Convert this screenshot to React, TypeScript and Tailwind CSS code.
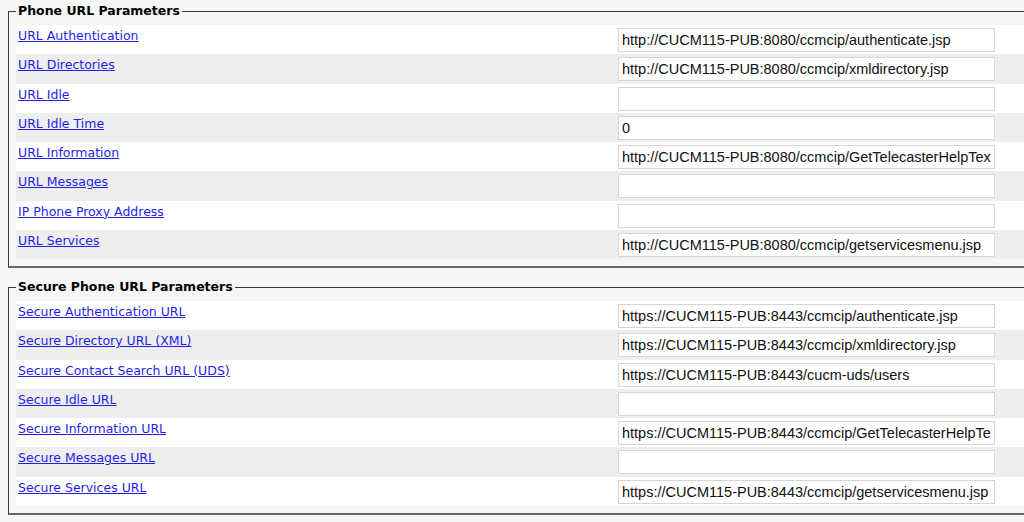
const phoneRows = [
  { label: "URL Authentication", value: "http://CUCM115-PUB:8080/ccmcip/authenticate.jsp" },
  { label: "URL Directories", value: "http://CUCM115-PUB:8080/ccmcip/xmldirectory.jsp" },
  { label: "URL Idle", value: "" },
  { label: "URL Idle Time", value: "0" },
  { label: "URL Information", value: "http://CUCM115-PUB:8080/ccmcip/GetTelecasterHelpText.jsp" },
  { label: "URL Messages", value: "" },
  { label: "IP Phone Proxy Address", value: "" },
  { label: "URL Services", value: "http://CUCM115-PUB:8080/ccmcip/getservicesmenu.jsp" },
];

const secureRows = [
  { label: "Secure Authentication URL", value: "https://CUCM115-PUB:8443/ccmcip/authenticate.jsp" },
  { label: "Secure Directory URL (XML)", value: "https://CUCM115-PUB:8443/ccmcip/xmldirectory.jsp" },
  { label: "Secure Contact Search URL (UDS)", value: "https://CUCM115-PUB:8443/cucm-uds/users" },
  { label: "Secure Idle URL", value: "" },
  { label: "Secure Information URL", value: "https://CUCM115-PUB:8443/ccmcip/GetTelecasterHelpText.jsp" },
  { label: "Secure Messages URL", value: "" },
  { label: "Secure Services URL", value: "https://CUCM115-PUB:8443/ccmcip/getservicesmenu.jsp" },
];

type Row = { label: string; value: string };

function ParamGroup({ title, rows }: { title: string; rows: Row[] }) {
  return (
    <fieldset className="ml-[8px] w-[1100px] border border-[#3a3a3a] border-b-2 border-b-[#666] pl-[7px] pt-[5px] pb-[7px]">
      <legend className="px-[2px] text-[12.5px] font-bold leading-[18px] text-black">{title}</legend>
      {rows.map((r, i) => (
        <div
          key={r.label}
          className={`flex h-[29.25px] items-start pt-[3px] ${i % 2 === 0 ? "bg-white" : "bg-[#eeeeee]"}`}
        >
          <a href="#" className="w-[602px] shrink-0 pl-[2px] text-[12.5px] leading-[15px] text-[#1f1fe8] underline">
            {r.label}
          </a>
          <input
            readOnly
            defaultValue={r.value}
            className="h-[24px] w-[377px] border border-[#d6d6d6] bg-white px-[3px] font-['Liberation_Sans',Arial,sans-serif] text-[14.5px] text-[#111] outline-none"
          />
        </div>
      ))}
    </fieldset>
  );
}

export default function App() {
  return (
    <div className="h-[522px] w-[1024px] overflow-hidden bg-[#f6f6f6] pt-[2px] font-['DejaVu_Sans',Verdana,sans-serif]">
      <ParamGroup title="Phone URL Parameters" rows={phoneRows} />
      <div className="h-[10px]" />
      <ParamGroup title="Secure Phone URL Parameters" rows={secureRows} />
    </div>
  );
}
